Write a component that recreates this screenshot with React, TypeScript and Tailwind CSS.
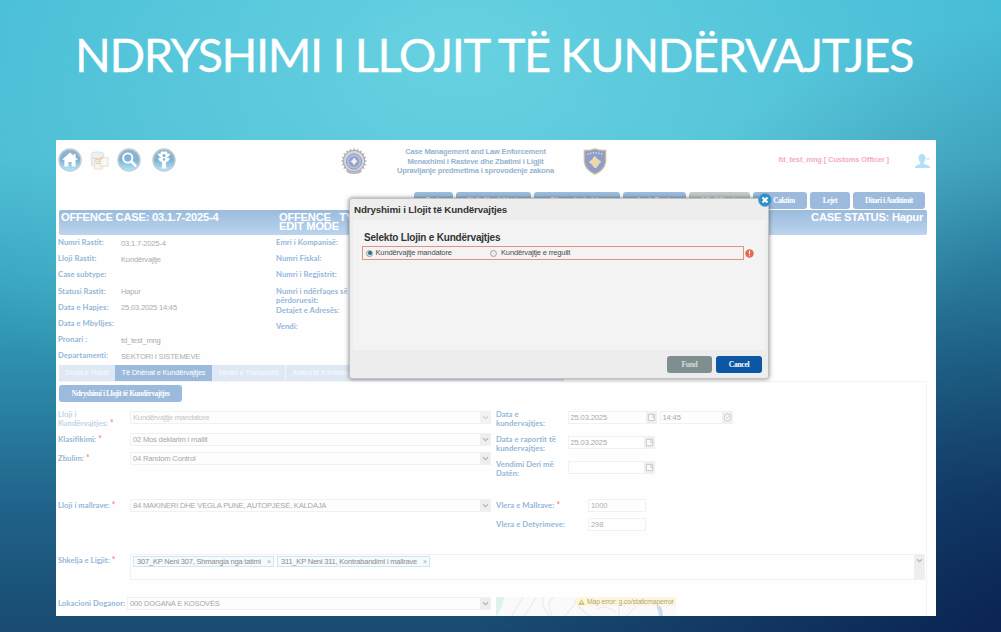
import React from "react";

type Kids = { children?: React.ReactNode };

const arial = "font-['Liberation_Sans',Arial,sans-serif]";
const treb = "font-['Lato',sans-serif]";

function Label({ children, className = "" }: Kids & { className?: string }) {
  return (
    <div className={`${treb} shrink-0 whitespace-nowrap text-[7.7px] leading-[9px] font-bold tracking-[0.05px] text-[#94b7d9] ${className}`}>
      {children}
    </div>
  );
}

function Star() {
  return <span className="text-[8.5px] leading-none text-[#f48a8a]"> *</span>;
}

function Chevron() {
  return (
    <svg viewBox="0 0 10 10" className="size-[9px]" fill="none" stroke="#b5b5b5" strokeWidth="1.3">
      <path d="M2.2 3.6 5 6.2 7.8 3.6" />
    </svg>
  );
}

function Select({ children, width, dim = false }: Kids & { width: string; dim?: boolean }) {
  return (
    <div className={`flex h-[13px] shrink-0 border border-[#f1f1f1] bg-[#fdfdfd] ${width}`}>
      <div className={`flex-1 pl-[2px] text-[7.6px] leading-[11px] tracking-[-0.2px] whitespace-nowrap ${dim ? "text-[#c4c4c4]" : "text-[#a8a8a8]"}`}>{children}</div>
      <div className={`flex w-[10px] items-center justify-center bg-[#eeeeee] ${dim ? "opacity-60" : ""}`}>
        <Chevron />
      </div>
    </div>
  );
}

function DateBox({ children, width, clock = false }: Kids & { width: string; clock?: boolean }) {
  return (
    <div className={`flex h-[13px] shrink-0 border border-[#f1f1f1] bg-[#fefefe] ${width}`}>
      <div className="flex-1 pl-[1.5px] text-[7.6px] leading-[11px] tracking-[-0.15px] text-[#a8a8a8]">{children}</div>
      <div className="flex w-[10px] items-center justify-center bg-[#f0f0f0]">
        <svg viewBox="0 0 10 10" className="size-[9px]" fill="#fafafa" stroke="#c6c6c6" strokeWidth="1">
          {clock ? (
            <>
              <circle cx="5" cy="5" r="3.8" />
              <path d="M3.5 4.5 5 6 7.5 2.8" fill="none" />
            </>
          ) : (
            <>
              <path d="M1.5 1.5h7v7h-7z" />
              <path d="M6.5 2v3h2" />
            </>
          )}
        </svg>
      </div>
    </div>
  );
}

function Orb({ children }: Kids) {
  return (
    <svg viewBox="0 0 24 24" className="size-6 shrink-0">
      <defs>
        <linearGradient id="orb" x1="0" y1="0" x2="0" y2="1">
          <stop offset="0" stopColor="#94b3cb" />
          <stop offset="0.5" stopColor="#80b3d4" />
          <stop offset="1" stopColor="#b0eafa" />
        </linearGradient>
      </defs>
      <circle cx="12" cy="12" r="11" fill="url(#orb)" stroke="#c3ced6" strokeWidth="1.5" />
      {children}
    </svg>
  );
}

function PoliceBadge() {
  const teeth = Array.from({ length: 20 }, (_, i) => i * 18);
  return (
    <svg viewBox="0 0 28 28" className="-mt-px h-[28px] w-[28px]">
      {teeth.map((a) => (
        <path key={a} d="M12.4 4 14 0.8 15.6 4z" fill="#aeb0b4" transform={`rotate(${a} 14 14)`} />
      ))}
      <circle cx="14" cy="14" r="10.6" fill="#d5d7db" stroke="#a9abb5" />
      <circle cx="14" cy="14.5" r="7.6" fill="#b3bddc" stroke="#929cb8" />
      <circle cx="14" cy="14.5" r="5.2" fill="#8fa0d4" />
      <path d="m14 10.6 1.6 2 2 1.9-2 1.6-1.5 2.2-1.6-2.2-2.1-1.6 2-1.6z" fill="#f4efda" />
      <path d="M7 22.5q7 5.5 14 0v3q-7 3-14 0z" fill="#b3b8cc" />
    </svg>
  );
}

function StateShield() {
  return (
    <svg viewBox="0 0 24 28" className="h-[27px] w-6">
      <path d="M1 2.5Q6.5 3 12 1q5.5 2 11 1.5V14q-1 9-11 13Q2 23 1 14z" fill="#8e9ec9" stroke="#cdbb98" strokeWidth="1.4" />
      <path d="M4 6.5q4-1.5 8-1.5t8 1.5" fill="none" stroke="#e6e9f3" strokeWidth="1.3" strokeDasharray="1.4 1.5" />
      <path d="m11.500 8 3 3.200 4 3-2.600 2.600-2.400 4-2.700-.6-1.600-2.700L5.500 14.500l3.500-2.500z" fill="#e9d9ad" />
    </svg>
  );
}

function NavButton({ children, className }: Kids & { className: string }) {
  return (
    <div className={`h-[17px] shrink-0 rounded-[3px] text-center font-['Liberation_Serif',serif] text-[7.4px] leading-[17px] font-bold tracking-[-0.4px] whitespace-nowrap text-white ${className}`}>
      {children}
    </div>
  );
}

const facts: [string, string][] = [
  ["Numri Rastit:", "03.1.7-2025-4"],
  ["Lloji Rastit:", "Kundërvajtje"],
  ["Case subtype:", ""],
  ["Statusi Rastit:", "Hapur"],
  ["Data e Hapjes:", "25.03.2025 14:45"],
  ["Data e Mbylljes:", ""],
  ["Pronari :", "fd_test_mng"],
  ["Departamenti:", "SEKTORI I SISTEMEVE"],
];

function TopBar() {
  return (
    <header className="flex h-[52px] shrink-0 pt-2 pr-[5px] pl-[1.5px]">
      <div className="flex w-[282px] shrink-0">
        <Orb>
          <path d="M12 4.500 4 11.800h2.400V18.500h4v-4.500h3.200v4.500h4v-6.700H20l-2.400-2.200V6h-2v1.800z" fill="#fff" />
        </Orb>
        <svg viewBox="0 0 22 22" className="mt-[2px] ml-[7px] size-[21px] shrink-0">
          <ellipse cx="9" cy="4" rx="6.5" ry="2" fill="#eef0f2" stroke="#d3d7db" strokeWidth=".7" />
          <path d="M2.5 4v12q6 4 13 0V4" fill="#edf0f2" stroke="#d6dadd" strokeWidth=".7" />
          <path d="M2.5 8q6 3 13 0" fill="none" stroke="#d3d7db" />
          <path d="M6 12h8v8H6z" fill="#fdf4f2" stroke="#ecdccd" />
          <path d="M12 8h8v9h-8z" fill="#f6f8f1" stroke="#dde3d5" />
          <path d="m6 11 3-2 2 2 4-4" fill="none" stroke="#f8cdb0" strokeWidth="1.5" />
          <path d="M12 8h3M7 14h5" stroke="#bfe0b4" strokeWidth="1.3" />
        </svg>
        <div className="ml-[7px] flex gap-[11px]">
          <Orb>
            <circle cx="10.8" cy="10" r="4.6" fill="none" stroke="#fff" strokeWidth="1.9" />
            <path d="m14.4 13.5 4 4.2" stroke="#fff" strokeWidth="2.6" strokeLinecap="round" />
          </Orb>
          <Orb>
            <path d="M9 3.500h6l.5 2.200 3-.5-1.800 3.400-1.500.5v1l2.800.2-1.800 3-1.500.4-1 1.300.7 5.500h-4.800l.7-5.500-1-1.300-1.500-.4L6 10.300l2.500-.2v-1L7 8.600 5.500 5.200l3 .5z" fill="#fff" />
            <circle cx="12" cy="7.500" r="1.500" fill="#7fadcb" />
            <circle cx="12" cy="11.500" r="1.300" fill="#7fb6d6" />
          </Orb>
        </div>
      </div>
      <PoliceBadge />
      <div className="-mt-px ml-[7px] w-[202px] text-center text-[7.5px] leading-[9.5px] font-bold tracking-[-0.15px] whitespace-nowrap text-[#94b3d0]">
        Case Management and Law Enforcement
        <br />
        Menaxhimi i Rasteve dhe Zbatimi i Ligjit
        <br />
        Upravljanje predmetima i sprovodenje zakona
      </div>
      <div className="ml-[6px]">
        <StateShield />
      </div>
      <div className="flex-1" />
      <div className="mt-[7px] mr-[26px] text-[7.5px] leading-[10px] font-bold tracking-[-0.12px] text-[#f3adc0]">fd_test_mng [ Customs Officer ]</div>
      <svg viewBox="0 0 16 15" className="mt-[6px] h-[15px] w-4" fill="#b1e0fa">
        <path d="M7 0c2.3 0 3.5 1.7 3.5 4S9.5 7.8 8.800 8.500v1.300l5.200 2q1 .6 1 2.200H0q0-1.600 1-2.200l4.500-2V8.500C4.500 7.700 3.600 6.500 3.600 4S4.800 0 7 0zM11.500 4.300h3v1.200h-3z" />
      </svg>
    </header>
  );
}

function Background() {
  return (
    <section className={`flex h-[476px] w-[880px] flex-col overflow-hidden bg-[#fefefe] ${arial}`}>
      <TopBar />
      <div className="flex h-[18px] shrink-0 justify-end gap-[3px] pr-[11px]">
        <NavButton className="w-[39px] bg-[#9cbbdc]">Dosja</NavButton>
        <NavButton className="w-[75px] bg-[#9cbbdc]">Krijo Konfirkimin</NavButton>
        <NavButton className="w-[86px] bg-[#9cbbdc]">Dërgo për vlerësim</NavButton>
        <NavButton className="w-[63px] bg-[#9cbbdc]">Anulo Rastin</NavButton>
        <NavButton className="w-[61px] bg-[#c3c8ca]">Mbyll Rastin</NavButton>
        <NavButton className="w-[54px] bg-[#9cbbdc] pl-[8px]">Caktim</NavButton>
        <NavButton className="w-[40px] bg-[#9cbbdc]">Lejet</NavButton>
        <NavButton className="w-[72px] bg-[#9cbbdc]">Ditari i Auditimit</NavButton>
      </div>
      <div className="mr-[9px] ml-[3px] flex h-[25px] shrink-0 justify-between rounded-[2px] bg-linear-to-b from-[#9bbbdc] to-[#bcd4ee] pt-[3px] pr-[4px] pl-[2px] text-[11.2px] leading-[9px] font-bold tracking-[-0.25px] whitespace-nowrap text-white">
        <div className="w-[218px]">OFFENCE CASE: 03.1.7-2025-4</div>
        <div className="flex-1">
          OFFENCE&nbsp;&nbsp; TYPE:
          <br />
          EDIT MODE
        </div>
        <div>CASE STATUS: Hapur</div>
      </div>
      <div className="flex h-[129px] shrink-0 pt-[2px] pl-[2px]">
        <div className="w-[218px]">
          {facts.map(([name, value]) => (
            <div key={name} className="flex h-[16.2px]">
              <Label className="w-[63px] pt-[1px]">{name}</Label>
              <div className="pt-[1.5px] text-[7.6px] leading-[9px] tracking-[-0.2px] whitespace-nowrap text-[#acacac]">{value}</div>
            </div>
          ))}
        </div>
        <div className="flex flex-col pt-px">
          <Label className="h-[16.2px]">Emri i Kompanisë:</Label>
          <Label className="h-[16.2px]">Numri Fiskal:</Label>
          <Label className="h-[16.2px]">Numri i Regjistrit:</Label>
          <Label className="h-[19.5px] leading-[8.5px]">
            Numri i ndërfaqes së
            <br />
            përdoruesit:
          </Label>
          <Label className="h-[16.2px]">Detajet e Adresës:</Label>
          <Label>Vendi:</Label>
        </div>
      </div>
      <div className="mt-px ml-[3px] flex h-4 w-[505px] shrink-0 bg-[#dfe8f5] text-[7.5px] leading-4 tracking-[-0.2px] whitespace-nowrap text-[#f8fafd]">
        <div className="w-[56px] text-center">Dosja e Rastit</div>
        <div className="w-[97px] bg-[#9cbbdc] text-center text-white">Të Dhënat e Kundërvajtjes</div>
        <div className="w-[74px] border-r border-[#f0f4fa] text-center">Mjetet e Transportit</div>
        <div className="pl-[6px]">Artikuj të Konfiskuar</div>
      </div>
      <div className="mr-[9px] ml-[2px] flex flex-1 flex-col border-t border-r border-[#f4f4f4] pt-[3px]">
        <NavButton className="ml-px w-[123px] bg-[#9cbbdc]">Ndryshimi i Llojit të Kundërvajtjes</NavButton>
        <div className="flex h-[152px] shrink-0 pt-[8px]">
          <div className="w-[438px] shrink-0">
            <div className="flex h-[23px] pt-[1px]">
              <Label className="-mt-px w-[72px] leading-[8.5px] text-[#c0d3e7]">
                Lloji i<br />
                Kundërvajtjes:
                <Star />
              </Label>
              <Select width="w-[361px]" dim>Kundërvajtje mandatore</Select>
            </div>
            <div className="flex h-[19px]">
              <Label className="w-[72px] pt-[2px]">Klasifikimi:<Star /></Label>
              <Select width="w-[361px]">02 Mos deklarim i mallit</Select>
            </div>
            <div className="flex h-[47px]">
              <Label className="w-[72px] pt-[2px]">Zbulim:<Star /></Label>
              <Select width="w-[361px]">04 Random Control</Select>
            </div>
            <div className="flex">
              <Label className="w-[72px] pt-[2px]">Lloji i mallrave:<Star /></Label>
              <Select width="w-[361px]">84 MAKINERI DHE VEGLA PUNE, AUTOPJESË, KALDAJA</Select>
            </div>
          </div>
          <div>
            <div className="flex h-[26px] pt-px">
              <Label className="-mt-px w-[72px] leading-[8.5px]">Data e<br />kundervajtjes:</Label>
              <DateBox width="w-[89px]">25.03.2025</DateBox>
              <div className="ml-[3px]"><DateBox width="w-[73px]" clock>14:45</DateBox></div>
            </div>
            <div className="flex h-[25px]">
              <Label className="-mt-px w-[72px] leading-[8.5px]">Data e raportit të<br />kundervajtjes:</Label>
              <DateBox width="w-[87px]">25.03.2025</DateBox>
            </div>
            <div className="flex h-[38px]">
              <Label className="-mt-px w-[72px] leading-[8.5px]">Vendimi Deri më<br />Datën:</Label>
              <DateBox width="w-[87px]" />
            </div>
            <div className="flex h-[19px]">
              <Label className="w-[92px] pt-[2px]">Vlera e Mallrave:<Star /></Label>
              <div className="h-[13px] w-[58px] border border-[#f1f1f1] pl-[2px] text-[7.6px] leading-[11px] tracking-[-0.1px] text-[#b0b0b0]">1000</div>
            </div>
            <div className="flex">
              <Label className="w-[92px] pt-[2px]">Vlera e Detyrimeve:</Label>
              <div className="h-[13px] w-[58px] border border-[#f1f1f1] pl-[2px] text-[7.6px] leading-[11px] tracking-[-0.1px] text-[#b0b0b0]">298</div>
            </div>
          </div>
        </div>
        <div className="flex h-[43px] shrink-0">
          <Label className="w-[72px] pt-[2px]">Shkelja e Ligjit:<Star /></Label>
          <div className="flex h-[26px] w-[795px] border border-[#f1f1f1]">
            <div className="flex flex-1 gap-[3px] pt-px pl-[2px] text-[7.5px] leading-[9px] tracking-[-0.2px] whitespace-nowrap text-[#8c8c8c]">
              <div className="flex h-[11px] w-[141px] justify-between border border-[#cde6f3] bg-[#f4fafd] pr-[2px] pl-[3px]">
                307_KP Neni 307, Shmangia nga tatimi <span className="text-[7px] text-[#b0b0b0]">×</span>
              </div>
              <div className="flex h-[11px] w-[153px] justify-between border border-[#cde6f3] bg-[#f4fafd] pr-[2px] pl-[3px]">
                311_KP Neni 311, Kontrabandimi i mallrave <span className="text-[7px] text-[#b0b0b0]">×</span>
              </div>
            </div>
            <div className="flex w-[10px] justify-center bg-[#eeeeee] pt-px"><Chevron /></div>
          </div>
        </div>
        <div className="flex shrink-0">
          <Label className="w-[69px] pt-[2px] tracking-[-0.05px]">Lokacioni Doganor:</Label>
          <Select width="w-[364px]">000 DOGANA E KOSOVËS</Select>
          <div className="relative ml-[5px] h-[20px] w-[180px] overflow-hidden bg-[#fafafa]">
            <svg viewBox="0 0 180 20" className="h-5 w-[180px]" fill="none">
              <path d="M0 0h8Q7 10 0 20z" fill="#dcf2ea" />
              <path d="m15 20 12-20M28 20 40 0M47 0q-2 12 8 20M57 0q-8 8 0 20M85 0 68 20M78 3q8 12 18 17M100 12q12-5 20 4M123 2v18M142 8q-8 6-12 12" stroke="#eceff1" strokeWidth="1.5" />
              <path d="M162 9q3 4 3 11" stroke="#ccdcec" strokeWidth="4" />
            </svg>
            <div className="absolute top-0 right-0 flex h-[9px] w-[100px] items-center gap-[2px] bg-[#fdf6dc] pl-[2px] text-[6.9px] leading-[9px] tracking-[-0.2px] whitespace-nowrap text-[#b3a681]">
              <svg viewBox="0 0 10 9" className="h-[6px] w-[7px] shrink-0"><path d="M5 0 10 9H0z" fill="#d8c174" /><path d="M5 3v3M5 7v1" stroke="#fff" /></svg>
              Map error: g.co/staticmaperror
            </div>
          </div>
        </div>
      </div>
    </section>
  );
}

function Dialog() {
  return (
    <div className={`absolute top-[198px] left-[349px] flex h-[181px] w-[420px] flex-col rounded-[3px] border border-[#c2c2c2] bg-[#ededed] shadow-[0_0_4px_rgba(0,0,0,0.5)] ${arial}`}>
      <svg viewBox="0 0 14 14" className="absolute -top-[6px] -right-[4px] size-[14px]">
        <circle cx="7" cy="7" r="6.5" fill="#2f8fc4" stroke="#63aed4" strokeWidth=".8" />
        <path d="m4.5 4.5 5 5M9.5 4.5l-5 5" stroke="#fff" strokeWidth="2.1" />
      </svg>
      <h2 className="h-[21px] pt-[5px] pl-[4px] text-[9.8px] leading-[12px] font-bold tracking-[-0.15px] text-[#333]">Ndryshimi i Llojit të Kundërvajtjes</h2>
      <div className="mx-[3px] h-[130px] bg-[#f3f3f3] pt-[12px] pl-[9px]">
        <h3 className="pl-[2px] text-[10px] leading-[12px] font-bold tracking-[-0.2px] text-[#333]">Selekto Llojin e Kundërvajtjes</h3>
        <div className="mt-[2px] flex items-center gap-[1px]">
          <div className="flex h-[14px] w-[382px] items-center border border-[#e0937d] pl-[3px] text-[7.6px] tracking-[-0.2px] whitespace-nowrap text-[#4d4d4d]">
            <span className="flex size-[7px] items-center justify-center rounded-full border border-[#9a9a9a] bg-[#dceaf3]"><span className="size-[4px] rounded-full bg-[#286a91]" /></span>
            <span className="w-[117px] pl-[2.5px]">Kundërvajtje mandatore</span>
            <span className="size-[7px] rounded-full border border-[#a5a5a5] bg-[#ececec]" />
            <span className="pl-[4px]">Kundërvajtje e rregullt</span>
          </div>
          <svg viewBox="0 0 9 9" className="size-[9px]">
            <circle cx="4.5" cy="4.5" r="4.2" fill="#e2694f" />
            <path d="M4.5 1.8v3.5M4.5 6.2v1.1" stroke="#fff" strokeWidth="1.2" />
          </svg>
        </div>
      </div>
      <div className="flex justify-end gap-[4px] pt-[6px] pr-[6px] text-center font-['Liberation_Serif',serif] text-[7.6px] leading-[17px] font-bold tracking-[-0.3px] text-white">
        <div className="h-[17px] w-[45px] rounded-[3px] bg-[#7f8e8e] text-[#d7dddd]">Fund</div>
        <div className="h-[17px] w-[46px] rounded-[3px] bg-[#0b57a4]">Cancel</div>
      </div>
    </div>
  );
}

export default function App() {
  return (
    <main className="relative flex h-[632px] w-[1001px] flex-col overflow-hidden bg-[radial-gradient(ellipse_620px_420px_at_46%_8%,rgba(125,224,232,0.62),rgba(125,224,232,0)),radial-gradient(ellipse_560px_640px_at_104%_104%,rgba(4,18,68,0.75),rgba(4,18,68,0)),linear-gradient(180deg,#42bad5_0%,#47bad3_25%,#36a2be_46%,#2b86a5_62%,#20638a_80%,#194a70_100%)]">
      <h1 className="h-[140px] shrink-0 pt-[24px] pl-[75px] font-['Lato',sans-serif] text-[47px] leading-[60px] tracking-[-1.4px] whitespace-nowrap text-white [-webkit-text-stroke:0.3px_white]">NDRYSHIMI I LLOJIT TË KUNDËRVAJTJES</h1>
      <div className="pl-[56px]">
        <Background />
      </div>
      <Dialog />
    </main>
  );
}
